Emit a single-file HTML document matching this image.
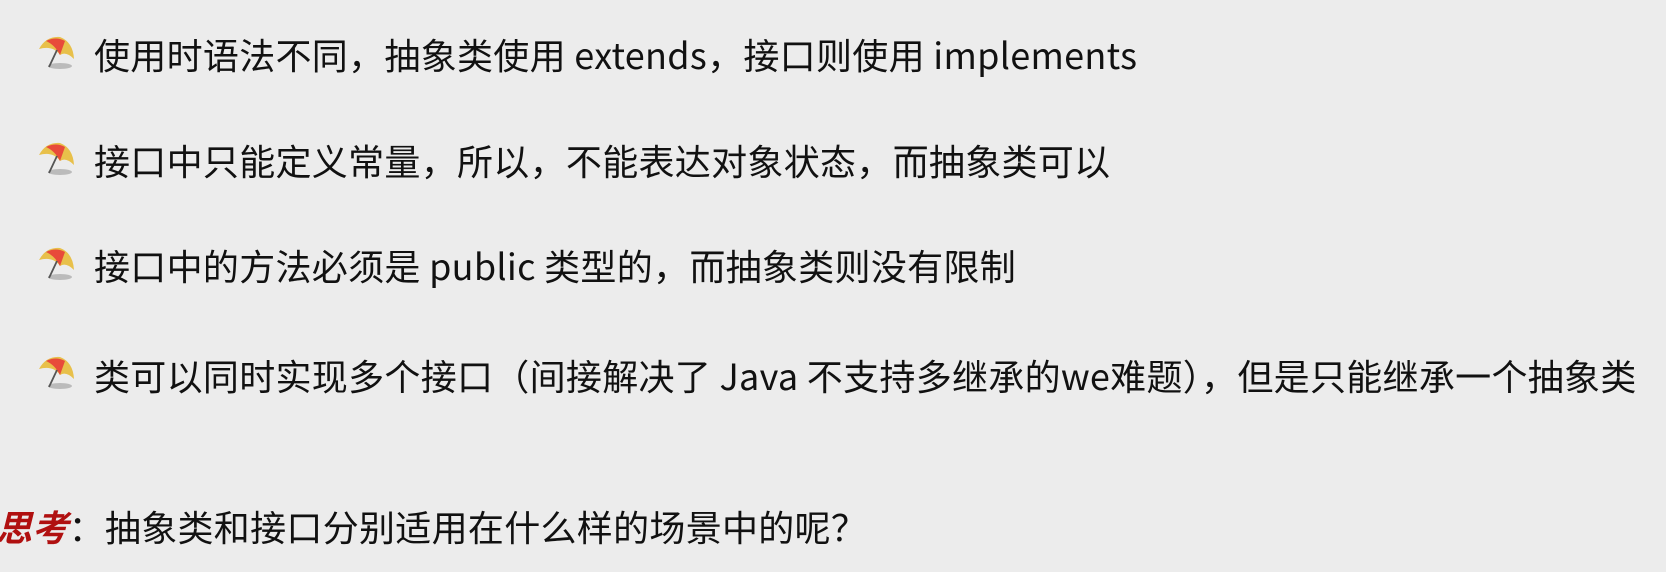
<!DOCTYPE html>
<html><head><meta charset="utf-8"><style>
html,body{margin:0;padding:0}
body{width:1666px;height:572px;background:#ececec;position:relative;overflow:hidden;font-family:"Noto Sans CJK SC","Liberation Sans",sans-serif;color:#111}
.l{position:absolute;left:94px;font-size:36px;line-height:40px;white-space:nowrap;letter-spacing:0.3px}
.ic{position:absolute;left:38px;width:38px;height:36px}
.t{position:absolute;left:-4px;top:506px;font-size:36px;line-height:40px;white-space:nowrap;letter-spacing:0.3px}
.t b{color:#b01010;font-style:italic}
</style></head><body>
<svg width="0" height="0" style="position:absolute"><defs>
<g id="u"><ellipse cx="22" cy="30" rx="12" ry="3" fill="#bbb"/><path d="M1 13 Q8 0 22 1 Q35 6 36 23 Q28 15 22 19 Q15 9 1 13Z" fill="#e8c04a"/><path d="M8 5 Q18 0 27 5 L22 19 Q17 9 8 5Z" fill="#e84a3a"/><line x1="19" y1="14" x2="11" y2="31" stroke="#555" stroke-width="1.8"/></g></defs></svg>
<svg class="ic" style="top:36px"><use href="#u"/></svg>
<div class="l" style="top:34px">使用时语法不同，抽象类使用 extends，接口则使用 implements</div>
<svg class="ic" style="top:142px"><use href="#u"/></svg>
<div class="l" style="top:140px">接口中只能定义常量，所以，不能表达对象状态，而抽象类可以</div>
<svg class="ic" style="top:247px"><use href="#u"/></svg>
<div class="l" style="top:245px">接口中的方法必须是 public 类型的，而抽象类则没有限制</div>
<svg class="ic" style="top:356px"><use href="#u"/></svg>
<div class="l" style="top:355px">类可以同时实现多个接口（间接解决了 Java 不支持多继承的we难题），但是只能继承一个抽象类</div>
<div class="t"><b>思考</b>：抽象类和接口分别适用在什么样的场景中的呢？</div>
</body></html>
